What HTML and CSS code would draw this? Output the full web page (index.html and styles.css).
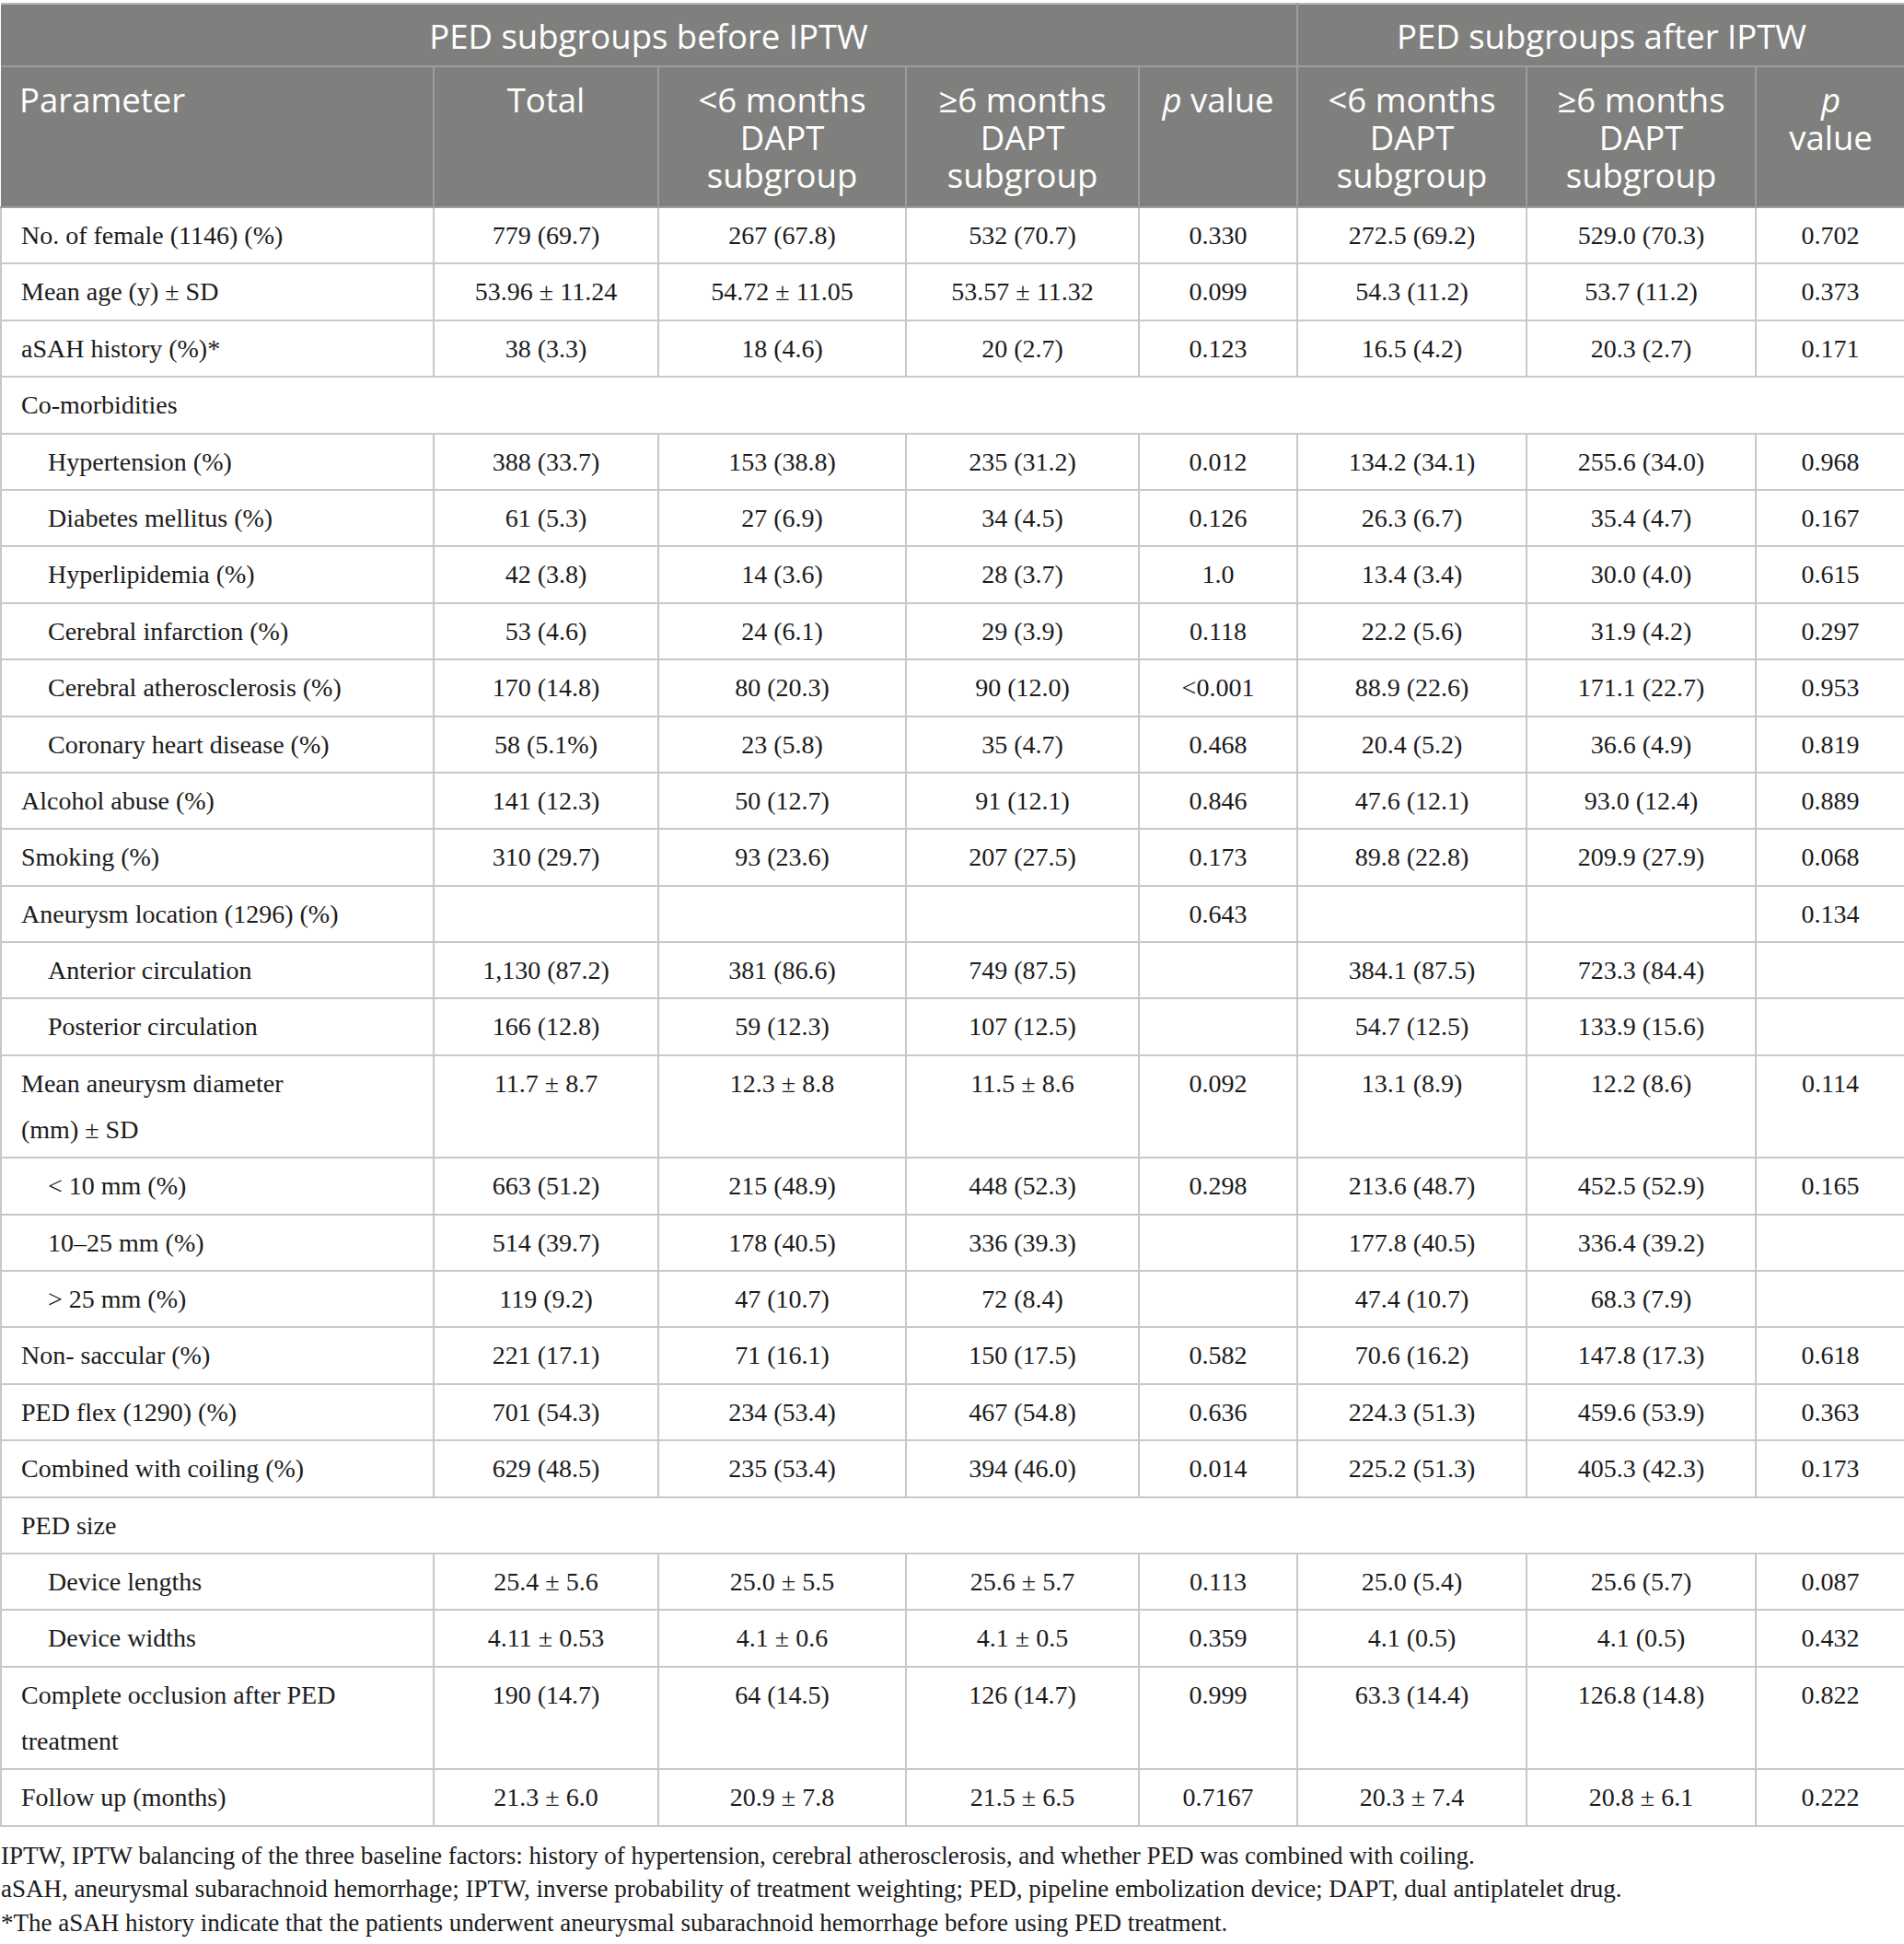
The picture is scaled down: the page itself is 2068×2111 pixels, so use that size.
FILE: index.html
```html
<!DOCTYPE html>
<html lang="en">
<head>
  <meta charset="UTF-8">
  <title>PED subgroups before and after IPTW</title>
  <link rel="stylesheet" href="styles.css">
</head>
<body>

<table class="data">
  <colgroup>
    <col class="c-param">
    <col class="c-total">
    <col class="c-lt">
    <col class="c-ge">
    <col class="c-p">
    <col class="c-lt2">
    <col class="c-ge2">
    <col class="c-p2">
  </colgroup>
  <thead>
    <tr class="group">
      <th colspan="5">PED subgroups before IPTW</th>
      <th colspan="3">PED subgroups after IPTW</th>
    </tr>
    <tr class="cols">
      <th class="left">Parameter</th>
      <th>Total</th>
      <th>&lt;6 months DAPT subgroup</th>
      <th>≥6 months DAPT subgroup</th>
      <th><i>p</i> value</th>
      <th>&lt;6 months DAPT subgroup</th>
      <th>≥6 months DAPT subgroup</th>
      <th><i>p</i><br>value</th>
    </tr>
  </thead>
  <tbody>
    <tr><td>No. of female (1146) (%)</td><td>779 (69.7)</td><td>267 (67.8)</td><td>532 (70.7)</td><td>0.330</td><td>272.5 (69.2)</td><td>529.0 (70.3)</td><td>0.702</td></tr>
    <tr><td>Mean age (y) ± SD</td><td>53.96 ± 11.24</td><td>54.72 ± 11.05</td><td>53.57 ± 11.32</td><td>0.099</td><td>54.3 (11.2)</td><td>53.7 (11.2)</td><td>0.373</td></tr>
    <tr><td>aSAH history (%)*</td><td>38 (3.3)</td><td>18 (4.6)</td><td>20 (2.7)</td><td>0.123</td><td>16.5 (4.2)</td><td>20.3 (2.7)</td><td>0.171</td></tr>
    <tr><td colspan="8">Co-morbidities</td></tr>
    <tr><td class="sub">Hypertension (%)</td><td>388 (33.7)</td><td>153 (38.8)</td><td>235 (31.2)</td><td>0.012</td><td>134.2 (34.1)</td><td>255.6 (34.0)</td><td>0.968</td></tr>
    <tr><td class="sub">Diabetes mellitus (%)</td><td>61 (5.3)</td><td>27 (6.9)</td><td>34 (4.5)</td><td>0.126</td><td>26.3 (6.7)</td><td>35.4 (4.7)</td><td>0.167</td></tr>
    <tr><td class="sub">Hyperlipidemia (%)</td><td>42 (3.8)</td><td>14 (3.6)</td><td>28 (3.7)</td><td>1.0</td><td>13.4 (3.4)</td><td>30.0 (4.0)</td><td>0.615</td></tr>
    <tr><td class="sub">Cerebral infarction (%)</td><td>53 (4.6)</td><td>24 (6.1)</td><td>29 (3.9)</td><td>0.118</td><td>22.2 (5.6)</td><td>31.9 (4.2)</td><td>0.297</td></tr>
    <tr><td class="sub">Cerebral atherosclerosis (%)</td><td>170 (14.8)</td><td>80 (20.3)</td><td>90 (12.0)</td><td>&lt;0.001</td><td>88.9 (22.6)</td><td>171.1 (22.7)</td><td>0.953</td></tr>
    <tr><td class="sub">Coronary heart disease (%)</td><td>58 (5.1%)</td><td>23 (5.8)</td><td>35 (4.7)</td><td>0.468</td><td>20.4 (5.2)</td><td>36.6 (4.9)</td><td>0.819</td></tr>
    <tr><td>Alcohol abuse (%)</td><td>141 (12.3)</td><td>50 (12.7)</td><td>91 (12.1)</td><td>0.846</td><td>47.6 (12.1)</td><td>93.0 (12.4)</td><td>0.889</td></tr>
    <tr><td>Smoking (%)</td><td>310 (29.7)</td><td>93 (23.6)</td><td>207 (27.5)</td><td>0.173</td><td>89.8 (22.8)</td><td>209.9 (27.9)</td><td>0.068</td></tr>
    <tr><td>Aneurysm location (1296) (%)</td><td></td><td></td><td></td><td>0.643</td><td></td><td></td><td>0.134</td></tr>
    <tr><td class="sub">Anterior circulation</td><td>1,130 (87.2)</td><td>381 (86.6)</td><td>749 (87.5)</td><td></td><td>384.1 (87.5)</td><td>723.3 (84.4)</td><td></td></tr>
    <tr><td class="sub">Posterior circulation</td><td>166 (12.8)</td><td>59 (12.3)</td><td>107 (12.5)</td><td></td><td>54.7 (12.5)</td><td>133.9 (15.6)</td><td></td></tr>
    <tr><td>Mean aneurysm diameter<br>(mm) ± SD</td><td>11.7 ± 8.7</td><td>12.3 ± 8.8</td><td>11.5 ± 8.6</td><td>0.092</td><td>13.1 (8.9)</td><td>12.2 (8.6)</td><td>0.114</td></tr>
    <tr><td class="sub">&lt; 10 mm (%)</td><td>663 (51.2)</td><td>215 (48.9)</td><td>448 (52.3)</td><td>0.298</td><td>213.6 (48.7)</td><td>452.5 (52.9)</td><td>0.165</td></tr>
    <tr><td class="sub">10–25 mm (%)</td><td>514 (39.7)</td><td>178 (40.5)</td><td>336 (39.3)</td><td></td><td>177.8 (40.5)</td><td>336.4 (39.2)</td><td></td></tr>
    <tr><td class="sub">&gt; 25 mm (%)</td><td>119 (9.2)</td><td>47 (10.7)</td><td>72 (8.4)</td><td></td><td>47.4 (10.7)</td><td>68.3 (7.9)</td><td></td></tr>
    <tr><td>Non- saccular (%)</td><td>221 (17.1)</td><td>71 (16.1)</td><td>150 (17.5)</td><td>0.582</td><td>70.6 (16.2)</td><td>147.8 (17.3)</td><td>0.618</td></tr>
    <tr><td>PED flex (1290) (%)</td><td>701 (54.3)</td><td>234 (53.4)</td><td>467 (54.8)</td><td>0.636</td><td>224.3 (51.3)</td><td>459.6 (53.9)</td><td>0.363</td></tr>
    <tr><td>Combined with coiling (%)</td><td>629 (48.5)</td><td>235 (53.4)</td><td>394 (46.0)</td><td>0.014</td><td>225.2 (51.3)</td><td>405.3 (42.3)</td><td>0.173</td></tr>
    <tr><td colspan="8">PED size</td></tr>
    <tr><td class="sub">Device lengths</td><td>25.4 ± 5.6</td><td>25.0 ± 5.5</td><td>25.6 ± 5.7</td><td>0.113</td><td>25.0 (5.4)</td><td>25.6 (5.7)</td><td>0.087</td></tr>
    <tr><td class="sub">Device widths</td><td>4.11 ± 0.53</td><td>4.1 ± 0.6</td><td>4.1 ± 0.5</td><td>0.359</td><td>4.1 (0.5)</td><td>4.1 (0.5)</td><td>0.432</td></tr>
    <tr><td>Complete occlusion after PED<br>treatment</td><td>190 (14.7)</td><td>64 (14.5)</td><td>126 (14.7)</td><td>0.999</td><td>63.3 (14.4)</td><td>126.8 (14.8)</td><td>0.822</td></tr>
    <tr><td>Follow up (months)</td><td>21.3 ± 6.0</td><td>20.9 ± 7.8</td><td>21.5 ± 6.5</td><td>0.7167</td><td>20.3 ± 7.4</td><td>20.8 ± 6.1</td><td>0.222</td></tr>
  </tbody>
</table>

<div class="notes">
  <p>IPTW, IPTW balancing of the three baseline factors: history of hypertension, cerebral atherosclerosis, and whether PED was combined with coiling.</p>
  <p>aSAH, aneurysmal subarachnoid hemorrhage; IPTW, inverse probability of treatment weighting; PED, pipeline embolization device; DAPT, dual antiplatelet drug.</p>
  <p>*The aSAH history indicate that the patients underwent aneurysmal subarachnoid hemorrhage before using PED treatment.</p>
</div>

</body>
</html>
```

FILE: styles.css
```css
body {
  margin: 0;
  background: #fff;
  color: #1b1b1b;
  font-family: "Liberation Serif", "Times New Roman", serif;
}

.data {
  width: 2068px;
  margin-top: 3px;
  table-layout: fixed;
  border-collapse: collapse;
  border-top: 2px solid #b8b8b8;
}

.c-param { width: 470px; }
.c-total { width: 244px; }
.c-lt { width: 269px; }
.c-ge { width: 253px; }
.c-p { width: 172px; }
.c-lt2 { width: 249px; }
.c-ge2 { width: 249px; }
.c-p2 { width: 162px; }

.data th {
  background: #7f807e;
  color: #fff;
  font-family: "Open Sans", "Liberation Sans", sans-serif;
  font-weight: 400;
  font-size: 36.5px;
  line-height: 41px;
  text-align: center;
  vertical-align: top;
  border: 2px solid #9d9e9c;
}

.data .group th {
  padding: 14px 10px 11px;
  border-top: none;
}

.data .cols th {
  padding: 15px 6px 13px;
}

.data .cols th.left {
  text-align: left;
  padding-left: 20px;
}

.data th:first-child { border-left: none; }
.data th:last-child { border-right: none; }

.data td {
  font-size: 28px;
  line-height: 50px;
  padding: 5px 10px 4.4px;
  text-align: center;
  vertical-align: top;
  border: 2px solid #c8c8c8;
}

.data td:first-child {
  text-align: left;
  padding-left: 21px;
}

.data td.sub {
  padding-left: 50px;
}

.notes {
  margin-top: 13px;
  font-size: 27px;
  line-height: 36.5px;
}

.notes p {
  margin: 0;
  padding-left: 1px;
}
```
